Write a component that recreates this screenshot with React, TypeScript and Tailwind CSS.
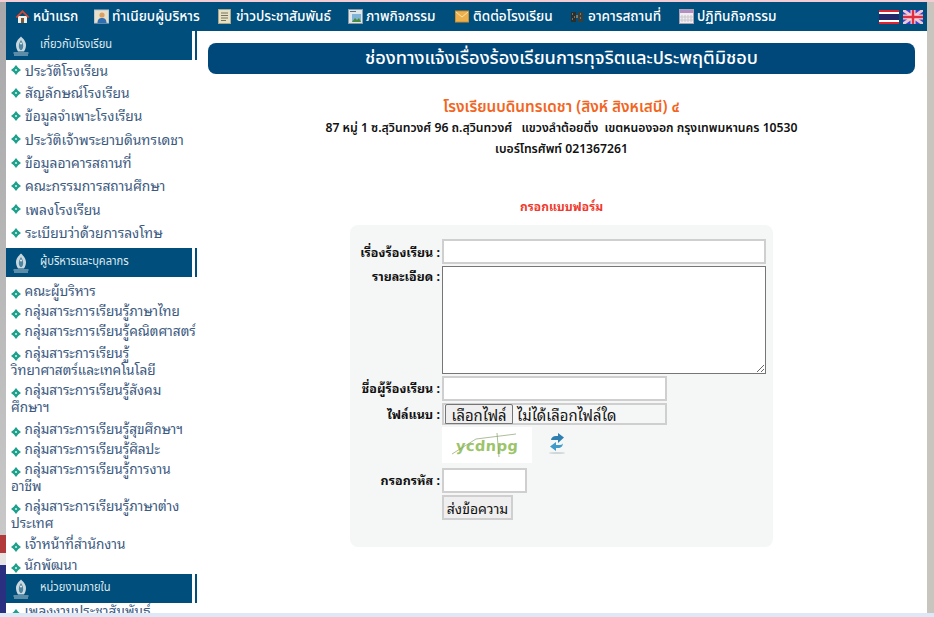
const thai = "font-['Noto_Sans_Thai','Kanit','Noto_Sans','Liberation_Sans',sans-serif]";
const looped = "font-['Noto_Sans_Thai_Looped','Sarabun','Waree','Loma','Garuda','Tahoma','Noto_Sans_Thai','Noto_Sans',sans-serif]";

const HomeIcon = () => (
  <svg width="15" height="15" viewBox="0 0 15 15" className="shrink-0">
    <path d="M3 7h9v7H3z" fill="#f2efe6" />
    <path d="M6 9h3v5H6z" fill="#7a5a3a" />
    <path d="M0.5 8 7.5 1l7 7-1.500 1-5.500-5.500L2 9z" fill="#d8442c" />
  </svg>
);
const UserIcon = () => (
  <svg width="15" height="15" viewBox="0 0 15 15" className="shrink-0">
    <rect x="0.5" y="1" width="14" height="13" fill="#e8dfc8" stroke="#b9c6d2" />
    <circle cx="8" cy="6" r="2.6" fill="#d9a066" />
    <path d="M3.5 14c0-4 2-5 4.500-5s4.500 1 4.500 5z" fill="#2f6fb5" />
  </svg>
);
const DocIcon = () => (
  <svg width="13" height="15" viewBox="0 0 13 15" className="shrink-0">
    <rect x="0.5" y="0.5" width="12" height="14" fill="#e6e0c4" stroke="#a9a68c" />
    <path d="M3 4h7M3 6.500h7M3 9h7M3 11.500h5" stroke="#77755f" />
  </svg>
);
const PhotoIcon = () => (
  <svg width="15" height="15" viewBox="0 0 15 15" className="shrink-0">
    <rect x="0.5" y="0.5" width="14" height="14" fill="#dfe6ea" stroke="#8c9aa5" />
    <rect x="4" y="5" width="9" height="8" fill="#7fb4d8" />
    <path d="M4 13l3-4 2 2 2-2 2 4z" fill="#4c8a3c" />
    <path d="M2 2.500h6" stroke="#5e7180" />
  </svg>
);
const MailIcon = () => (
  <svg width="14" height="13" viewBox="0 0 14 13" className="shrink-0">
    <rect x="0.5" y="1" width="13" height="11" fill="#eeb04c" stroke="#cf8e2c" />
    <path d="M1 2l6 5 6-5" fill="none" stroke="#fbe3ad" />
  </svg>
);
const BuildingIcon = () => (
  <svg width="14" height="13" viewBox="0 0 14 13" className="shrink-0">
    <rect x="1" y="2" width="5" height="10" fill="#2c2f2c" />
    <rect x="8" y="2" width="5" height="10" fill="#3b3f38" />
    <path d="M6 5h2v3H6z" fill="#777a6c" />
    <path d="M2 4h1M4 7h1M10 4h1M10 8h1M2 9h1" stroke="#b8b59c" />
  </svg>
);
const CalendarIcon = () => (
  <svg width="15" height="15" viewBox="0 0 15 15" className="shrink-0">
    <rect x="0.500" y="0.500" width="14" height="14" fill="#f0eef2" stroke="#a9a3b3" />
    <rect x="1" y="1" width="13" height="3" fill="#b38fc0" />
    <path d="M3 6v7M6 6v7M9 6v7M12 6v7M1 8h13M1 11h13" stroke="#c9c6cc" />
  </svg>
);

const ThaiFlag = () => (
  <div className="flex h-[14px] w-[20px] flex-col">
    <div className="h-[2px] bg-[#e0232e]" />
    <div className="h-[2px] bg-white" />
    <div className="h-[6px] bg-[#23286b]" />
    <div className="h-[2px] bg-white" />
    <div className="h-[2px] bg-[#e0232e]" />
  </div>
);
const UkFlag = () => (
  <svg width="20" height="14" viewBox="0 0 20 14">
    <rect width="20" height="14" fill="#3d3fd8" />
    <path d="M0 0l20 14M20 0L0 14" stroke="#f0c8d0" strokeWidth="3" />
    <path d="M10 0v14M0 7h20" stroke="#f4d8dc" strokeWidth="5" />
    <path d="M10 0v14M0 7h20" stroke="#e03040" strokeWidth="2.500" />
  </svg>
);

const Emblem = () => (
  <svg width="16" height="20" viewBox="0 0 16 20" className="shrink-0">
    <path d="M8 0.500C6.500 2 3 5 3 9c0 3 1 5 2 6.500h6c1-1.500 2-3.500 2-6.500 0-4-3.500-7-5-8.500z" fill="#c9d8de" />
    <path d="M8 4C6.800 6 5.800 8 5.800 10S6.500 13 7.300 14h1.400c.8-1 1.500-2 1.500-4S9.200 6 8 4z" fill="#4d84a0" />
    <circle cx="8" cy="7.500" r="1" fill="#e6eef1" />
    <path d="M0.500 17h15M1 19h14" stroke="#b7ccd4" strokeWidth="1.200" />
  </svg>
);

const Bullet = ({ className = "" }: { className?: string }) => (
  <svg width="10" height="10" viewBox="0 0 10 10" className={`inline-block shrink-0 ${className}`}>
    <path d="M5 0l2.200 2.800L10 5 7.200 7.200 5 10 2.800 7.200 0 5l2.800-2.200z" fill="#1fa08c" />
    <circle cx="5" cy="5" r="1.100" fill="#c8efe6" />
  </svg>
);

const SectionHeader = ({ title }: { title: string }) => (
  <div className="relative z-10 flex h-[29px] shrink-0 gap-[3px] bg-white">
    <div className="flex w-[186px] items-center bg-[#004e7c] pl-[7px]">
      <Emblem />
      <span className="ml-[11px] inline-block origin-left scale-x-[0.89] whitespace-nowrap text-[12.500px] text-[#dfeaf0]">{title}</span>
    </div>
    <div className="w-[2px] bg-[#004e7c]" />
  </div>
);

const aboutLinks: [string, string][] = [
  ["ประวัติโรงเรียน", "h-[22px]"],
  ["สัญลักษณ์โรงเรียน", "h-[23px]"],
  ["ข้อมูลจำเพาะโรงเรียน", "h-[23px]"],
  ["ประวัติเจ้าพระยาบดินทรเดชา", "h-[24px]"],
  ["ข้อมูลอาคารสถานที่", "h-[23px]"],
  ["คณะกรรมการสถานศึกษา", "h-[23px]"],
  ["เพลงโรงเรียน", "h-[24px]"],
  ["ระเบียบว่าด้วยการลงโทษ", "h-[23px]"],
];

const staffLinks: [string, string][] = [
  ["คณะผู้บริหาร", "h-[20px]"],
  ["กลุ่มสาระการเรียนรู้ภาษาไทย", "h-[20px]"],
  ["กลุ่มสาระการเรียนรู้คณิตศาสตร์", "h-[22px]"],
  ["กลุ่มสาระการเรียนรู้\nวิทยาศาสตร์และเทคโนโลยี", "h-[37px]"],
  ["กลุ่มสาระการเรียนรู้สังคม\nศึกษาฯ", "h-[39px]"],
  ["กลุ่มสาระการเรียนรู้สุขศึกษาฯ", "h-[20px]"],
  ["กลุ่มสาระการเรียนรู้ศิลปะ", "h-[20px]"],
  ["กลุ่มสาระการเรียนรู้การงาน\nอาชีพ", "h-[37px]"],
  ["กลุ่มสาระการเรียนรู้ภาษาต่าง\nประเทศ", "h-[38px]"],
  ["เจ้าหน้าที่สำนักงาน", "h-[21px]"],
  ["นักพัฒนา", "h-[14px]"],
];

const navItems = [
  { icon: <HomeIcon />, label: "หน้าแรก", w: "w-[79px]", gap: "gap-[3px]" },
  { icon: <UserIcon />, label: "ทำเนียบผู้บริหาร", w: "w-[124px]", gap: "gap-[3px]" },
  { icon: <DocIcon />, label: "ข่าวประชาสัมพันธ์", w: "w-[130px]", gap: "gap-[5px]" },
  { icon: <PhotoIcon />, label: "ภาพกิจกรรม", w: "w-[107px]", gap: "gap-[3px]" },
  { icon: <MailIcon />, label: "ติดต่อโรงเรียน", w: "w-[115px]", gap: "gap-[4px]" },
  { icon: <BuildingIcon />, label: "อาคารสถานที่", w: "w-[109px]", gap: "gap-[4px]" },
  { icon: <CalendarIcon />, label: "ปฏิทินกิจกรรม", w: "w-[100px]", gap: "gap-[3px]" },
];

const Label = ({ children, className = "pt-[3px]" }: { children: string; className?: string }) => (
  <div className={`mr-[2px] flex w-[90px] shrink-0 justify-end text-[12.500px] font-bold text-[#111] ${className}`}>
    {children}
  </div>
);

export default function App() {
  return (
    <div className={`flex h-[617px] w-[934px] flex-col overflow-hidden bg-white ${thai}`}>
      <div className="h-[2px] shrink-0 bg-[#f4cdd4]" />
      <div className="flex min-h-0 flex-1">
        <div className="flex w-[6px] shrink-0 flex-col bg-[#c4c2c0]">
          <div className="h-[533px] bg-gradient-to-b from-[#a8a7a9] to-[#c9c8c8]" />
          <div className="h-[18px] bg-[#b33a3a]" />
          <div className="h-[12px] bg-[#e9e4e4]" />
          <div className="flex-1 bg-[#2b2f80]" />
        </div>

        <div className="flex min-w-0 flex-1 flex-col">
          <nav className="flex h-[29px] shrink-0 items-center bg-[#004e7c] pl-[9px] pr-[4px]">
            {navItems.map((item) => (
              <div key={item.label} className={`flex items-center ${item.gap} ${item.w}`}>
                {item.icon}
                <span className="pt-[1px] text-[13.600px] font-medium whitespace-nowrap text-white">{item.label}</span>
              </div>
            ))}
            <div className="ml-auto flex gap-[4px]">
              <ThaiFlag />
              <UkFlag />
            </div>
          </nav>

          <div className="flex min-h-0 flex-1">
            <aside className="flex w-[191px] shrink-0 flex-col overflow-hidden">
              <SectionHeader title="เกี่ยวกับโรงเรียน" />
              <ul className={`-mt-[1px] flex h-[189px] shrink-0 flex-col ${looped}`}>
                {aboutLinks.map(([label, h]) => (
                  <li key={label} className={`flex items-center gap-[4px] pl-[5px] text-[13.800px] whitespace-nowrap text-[#3c5a80] ${h}`}>
                    <Bullet />
                    {label}
                  </li>
                ))}
              </ul>
              <SectionHeader title="ผู้บริหารและบุคลากร" />
              <ul className={`flex h-[297px] shrink-0 flex-col pt-[5px] ${looped}`}>
                {staffLinks.map(([label, h]) => (
                  <li key={label} className={`pl-[5px] text-[13.600px] leading-[17px] whitespace-pre text-[#3c5a80] ${h}`}>
                    <Bullet className="align-[-3px]" /> {label}
                  </li>
                ))}
              </ul>
              <SectionHeader title="หน่วยงานภายใน" />
              <div className={`-mt-[1px] pl-[5px] text-[13.600px] leading-[17px] whitespace-nowrap text-[#3c5a80] ${looped}`}>
                <Bullet className="align-[-3px]" /> เพลงงานประชาสัมพันธ์
              </div>
            </aside>

            <main className="min-w-0 flex-1 pl-[11px] pr-[12px] pt-[12px]">
              <h1 className="flex h-[31px] items-center justify-center rounded-[8px] bg-[#00477a] text-[18.200px] font-medium text-white">
                ช่องทางแจ้งเรื่องร้องเรียนการทุจริตและประพฤติมิชอบ
              </h1>
              <div className="mt-[24px] text-center">
                <div className="text-[15.300px] font-semibold leading-[20px] text-[#f26522]">
                  โรงเรียนบดินทรเดชา (สิงห์ สิงหเสนี) ๔
                </div>
                <div className="text-[12.200px] font-semibold leading-[21px] text-[#111]">
                  87 หมู่ 1 ซ.สุวินทวงศ์ 96 ถ.สุวินทวงศ์ &nbsp; แขวงลำต้อยติ่ง &nbsp;เขตหนองจอก กรุงเทพมหานคร 10530
                </div>
                <div className="text-[12.200px] font-semibold leading-[21px] text-[#111]">เบอร์โทรศัพท์ 021367261</div>
                <div className={`mt-[37px] text-[12px] font-bold leading-[18px] text-[#f03a2e] ${looped}`}>กรอกแบบฟอร์ม</div>
              </div>

              <form className={`mx-[142px] mt-[10px] flex h-[322px] w-[423px] flex-col gap-[2px] rounded-[8px] bg-[#f5f7f7] pt-[14px] ${looped}`}>
                <div className="flex">
                  <Label>เรื่องร้องเรียน :</Label>
                  <input className="h-[25px] w-[324px] border-2 border-[#cfcfcf] bg-white outline-none" />
                </div>
                <div className="flex">
                  <Label className="pt-0">รายละเอียด :</Label>
                  <textarea className="h-[108px] w-[324px] border border-[#767676] bg-white" />
                </div>
                <div className="flex">
                  <Label className="pt-[2px]">ชื่อผู้ร้องเรียน :</Label>
                  <input className="h-[25px] w-[225px] border-2 border-[#cfcfcf] bg-white outline-none" />
                </div>
                <div className="flex">
                  <Label className="pt-[1px]">ไฟล์แนบ :</Label>
                  <div className="flex h-[22px] w-[225px] items-center border-2 border-[#cfcfcf] pl-[1px] text-[14.800px] text-[#111]">
                    <span className="flex h-[20px] w-[68px] items-center justify-center rounded-t-[2px] border border-[#767676] bg-[#efefef]">
                      เลือกไฟล์
                    </span>
                    <span className="ml-[4px] whitespace-nowrap">ไม่ได้เลือกไฟล์ใด</span>
                  </div>
                </div>
                <div className="flex items-center">
                  <div className="w-[92px] shrink-0" />
                  <div className="relative flex h-[36px] w-[90px] items-center justify-center bg-white">
                    <span className="-skew-x-3 pt-[4px] text-[14.500px] font-bold tracking-[0.5px] text-[#9cc46a] font-['DejaVu_Sans',sans-serif]">
                      ycdnpg
                    </span>
                    <svg width="90" height="36" viewBox="0 0 90 36" className="absolute inset-0">
                      <path d="M10 27 34 12 74 7M55 6l2 24" stroke="#8aa070" strokeWidth="0.700" fill="none" />
                    </svg>
                  </div>
                  <svg width="18" height="21" viewBox="0 0 18 21" className="-mt-[3px] ml-[16px]">
                    <path d="M3 7c0-2 2-4 5-4h2V0l6 4.500L10 10V7H3z" fill="#2f7fb0" />
                    <path d="M15 10c0 3-2 5-5 5H8v3l-6-4.500L8 9v3h4c1.500 0 3-.8 3-2z" fill="#3f9bc9" />
                    <ellipse cx="9" cy="20" rx="8" ry="1" fill="#cfd6da" />
                  </svg>
                </div>
                <div className="mt-[3px] flex">
                  <Label className="pt-[2px]">กรอกรหัส :</Label>
                  <input className="h-[25px] w-[85px] border-2 border-[#cfcfcf] bg-white outline-none" />
                </div>
                <div className="flex">
                  <div className="w-[92px] shrink-0" />
                  <button type="button" className="h-[25px] w-[71px] border-2 border-[#cfcfcf] bg-[#efefef] text-[14px] text-[#111]">
                    ส่งข้อความ
                  </button>
                </div>
              </form>
            </main>
          </div>
        </div>

        <div className="w-[7px] shrink-0 bg-[#c8c5bf]" />
      </div>
      <div className="h-[4px] shrink-0 bg-[#dfe8f6]" />
    </div>
  );
}
